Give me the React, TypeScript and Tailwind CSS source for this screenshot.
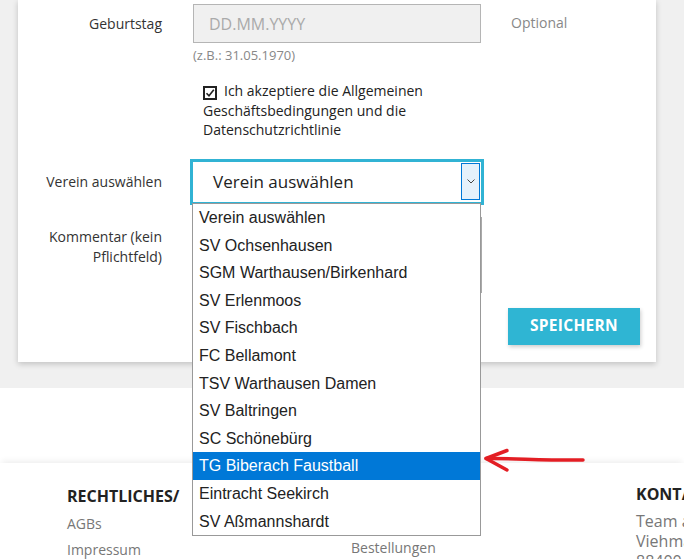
import React from "react";

const vereine = [
  "Verein auswählen",
  "SV Ochsenhausen",
  "SGM Warthausen/Birkenhard",
  "SV Erlenmoos",
  "SV Fischbach",
  "FC Bellamont",
  "TSV Warthausen Damen",
  "SV Baltringen",
  "SC Schönebürg",
  "TG Biberach Faustball",
  "Eintracht Seekirch",
  "SV Aßmannshardt",
];

const sans = "font-['Open_Sans','Noto_Sans',sans-serif]";

export default function App() {
  return (
    <div className={`relative w-full h-[559px] overflow-hidden bg-white ${sans}`}>
      {/* Form area */}
      <div className="h-[388px] bg-[#f0f0f0]">
        <div className="ml-[18px] w-[638px] h-[362px] bg-white shadow-[0_2px_6px_rgba(0,0,0,0.2)] flex flex-col">
          {/* Geburtstag */}
          <div className="mt-[4px] flex items-center h-[39px]">
            <span className="w-[144px] text-right text-[14px] text-[#333]">Geburtstag</span>
            <input
              className="ml-[31px] w-[288px] h-[39px] border border-[#b5b5b5] bg-[#f0f0f0] pl-[15px] text-[16px] placeholder:text-[#aaa] outline-none"
              placeholder="DD.MM.YYYY"
            />
            <span className="ml-[30px] -mt-[3px] text-[14px] text-[#888]">Optional</span>
          </div>
          <div className="ml-[175px] mt-[3px] text-[13px] leading-[18px] text-[#888]">(z.B.: 31.05.1970)</div>

          {/* AGB */}
          <div className="ml-[185px] mt-[17px] w-[245px] text-[14px] leading-[19.5px] text-[#222]">
            <span className="inline-flex items-center justify-center w-[14px] h-[14px] border-2 border-[#222] mr-[7px] align-[-2px]">
              <svg viewBox="0 0 10 10" className="w-[10px] h-[10px]">
                <path d="M1.5 5.2 L4 7.8 L8.8 1.8" fill="none" stroke="#222" strokeWidth="1.6" />
              </svg>
            </span>
            Ich akzeptiere die Allgemeinen Geschäftsbedingungen und die Datenschutzrichtlinie
          </div>

          {/* Verein */}
          <div className="mt-[19px] flex items-center">
            <span className="w-[144px] text-right text-[14px] text-[#333]">Verein auswählen</span>
            <div className="ml-[28px] w-[294px] h-[46px] border-[3px] border-[#31b3d4] bg-white flex items-center">
              <span className="pl-[20px] text-[17px] text-[#222]">Verein auswählen</span>
              <span className="ml-auto mr-[1px] mb-[1px] w-[19px] h-[37px] bg-[#e5f1fb] border border-[#0078d7] flex items-center justify-center">
                <svg viewBox="0 0 8 5" className="w-[8px] h-[5px]">
                  <path d="M0.5 0.5 L4 4 L7.5 0.5" fill="none" stroke="#444" strokeWidth="1" />
                </svg>
              </span>
            </div>
          </div>

          {/* Kommentar */}
          <div className="mt-[12px] flex items-start">
            <span className="mt-[10px] w-[144px] text-right text-[14px] leading-[20px] text-[#333]">
              Kommentar (kein
              <br />
              Pflichtfeld)
            </span>
            <textarea className="ml-[31px] w-[289px] h-[76px] border border-[#aaa] resize-none" />
          </div>

          <div className="mt-[15px] flex justify-end pr-[16px]">
            <button className="w-[132px] h-[37px] bg-[#2fb5d3] text-white font-bold text-[15.5px] tracking-[0.3px] shadow-[1px_2px_4px_rgba(0,0,0,0.2)]">
              SPEICHERN
            </button>
          </div>
        </div>
      </div>

      <div className="h-[75px]" />

      {/* Footer */}
      <footer className="shadow-[0_-4px_6px_-2px_rgba(0,0,0,0.07)] flex pl-[67px] pt-[22px] h-[200px]">
        <div className="w-[284px] shrink-0">
          <h3 className="text-[16px] font-bold text-[#222] leading-[22px] whitespace-nowrap">RECHTLICHES/</h3>
          <ul className="mt-[4px] text-[14px] text-[#777] leading-[26px]">
            <li>AGBs</li>
            <li>Impressum</li>
          </ul>
        </div>
        <div className="w-[285px] shrink-0">
          <div className="h-[22px]" />
          <ul className="mt-[2px] text-[14px] text-[#777] leading-[26px]">
            <li className="h-[26px]" />
            <li>Bestellungen</li>
          </ul>
        </div>
        <div className="shrink-0 whitespace-nowrap">
          <h3 className="-mt-[2px] text-[16px] font-bold text-[#222] leading-[22px]">KONTAKT</h3>
          <p className="mt-[6px] text-[16px] text-[#777] leading-[20px]">
            Team am Viehmarkt
            <br />
            Viehmarktstraße 1
            <br />
            88400 Biberach
          </p>
        </div>
      </footer>

      {/* Open dropdown list */}
      <ul className="absolute left-[192px] top-[203px] w-[289px] border border-[#999] bg-white font-['Liberation_Sans',Arial,sans-serif] text-[16px] text-[#222]">
        {vereine.map((v) => (
          <li
            key={v}
            className={`h-[27.6px] leading-[27.6px] pl-[6px] whitespace-nowrap ${
              v === "TG Biberach Faustball" ? "bg-[#0078d7] text-white" : ""
            }`}
          >
            {v}
          </li>
        ))}
      </ul>

      {/* Red annotation arrow */}
      <svg className="absolute left-[482px] top-[446px] w-[106px] h-[30px]" viewBox="0 0 106 30" fill="none">
        <path d="M4 12.5 C 30 12, 60 14.5, 101 14" stroke="#e31e24" strokeWidth="3.5" strokeLinecap="round" />
        <path d="M25 4.5 L 4 12.5 L 25 24" stroke="#e31e24" strokeWidth="3.5" strokeLinecap="round" strokeLinejoin="round" />
      </svg>
    </div>
  );
}
